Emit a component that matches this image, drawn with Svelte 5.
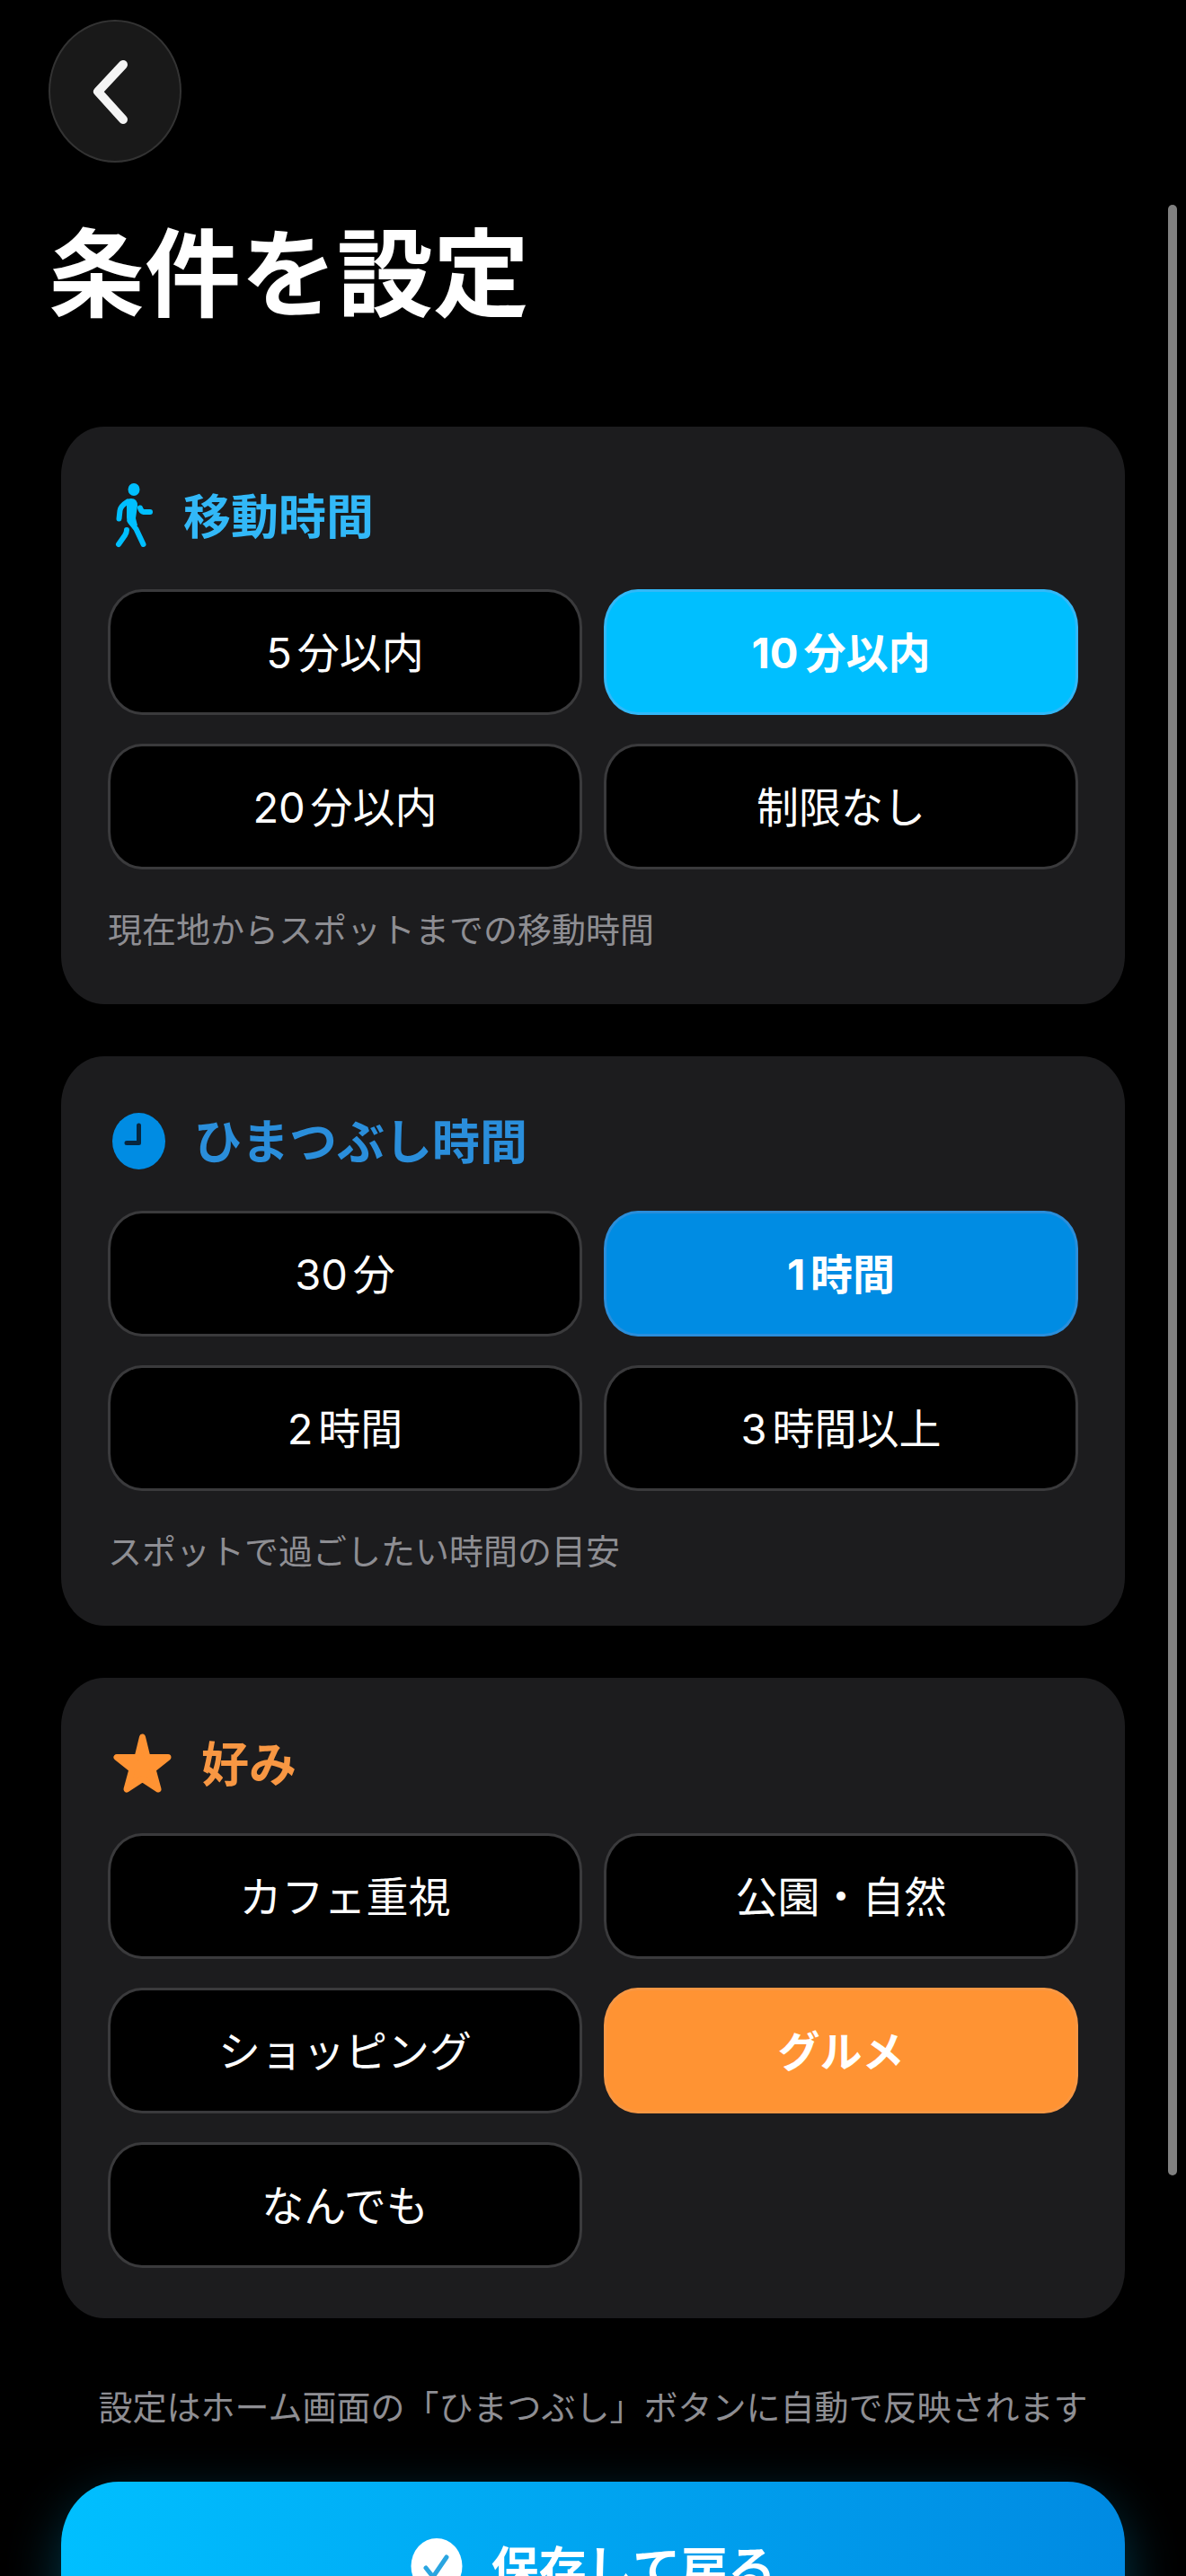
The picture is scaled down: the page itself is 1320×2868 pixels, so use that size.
<script lang="ts">
  interface Section {
    id: string;
    title: string;
    icon: 'walk' | 'clock' | 'star';
    options: string[];
    selected: string;
    hint?: string;
  }

  let sections: Section[] = $state([
    {
      id: 'travel',
      title: '移動時間',
      icon: 'walk',
      options: ['5分以内', '10分以内', '20分以内', '制限なし'],
      selected: '10分以内',
      hint: '現在地からスポットまでの移動時間',
    },
    {
      id: 'stay',
      title: 'ひまつぶし時間',
      icon: 'clock',
      options: ['30分', '1時間', '2時間', '3時間以上'],
      selected: '1時間',
      hint: 'スポットで過ごしたい時間の目安',
    },
    {
      id: 'taste',
      title: '好み',
      icon: 'star',
      options: ['カフェ重視', '公園・自然', 'ショッピング', 'グルメ', 'なんでも'],
      selected: 'グルメ',
    },
  ]);
</script>

<div class="screen">
  <main class="content">
    <header>
      <button class="back" aria-label="戻る">
        <svg width="44" height="76" viewBox="0 0 44 76" aria-hidden="true">
          <path d="M36 8 8 38l28 31" />
        </svg>
      </button>
      <h1>条件を設定</h1>
    </header>

    <div class="cards">
      {#each sections as section (section.id)}
        <section class="card {section.id}" aria-labelledby={section.id}>
          <div class="heading">
            {#if section.icon === 'walk'}
              <svg width="60" height="85" viewBox="0 0 60 85" aria-hidden="true">
                <ellipse cx="29" cy="14" rx="6.5" ry="7" fill="currentColor" />
                <path d="M18 29q4-5 8-5 7 0 7 8l-2 14 2 8-7 1q-5-4-5-10V30z" fill="currentColor" />
                <g class="limbs">
                  <path d="M22 27.500q-8 5-8.500 10l-1 9" />
                  <path d="M36 34.500q1 4 4 4.500h7" />
                  <path d="M24.500 49l7 9 8 17" />
                  <path d="M21 59q0 3-2 6l-7 10" />
                </g>
              </svg>
            {:else if section.icon === 'clock'}
              <svg width="72" height="76" viewBox="0 0 72 76" aria-hidden="true">
                <ellipse cx="34.5" cy="38.5" rx="29.5" ry="31.5" fill="currentColor" />
                <path class="hands" d="M34.5 21v19.500H21" />
              </svg>
            {:else}
              <svg width="80" height="77" viewBox="0 0 80 77" aria-hidden="true">
                <path
                  class="star"
                  d="M38.500 10 44 32.500H67L50 46 56 68 38.500 56.500 21 68 27 46 10 32.500H33z"
                />
              </svg>
            {/if}
            <h2 id={section.id}>{section.title}</h2>
          </div>

          <div class="options">
            {#each section.options as option}
              <button
                class="option"
                class:selected={section.selected === option}
                aria-pressed={section.selected === option}
                onclick={() => (section.selected = option)}
              >
                {option}
              </button>
            {/each}
          </div>

          {#if section.hint}
            <p class="hint">{section.hint}</p>
          {/if}
        </section>
      {/each}
    </div>

    <p class="note">設定はホーム画面の「ひまつぶし」ボタンに自動で反映されます</p>

    <button class="save">
      <svg width="58" height="62" viewBox="0 0 58 62" aria-hidden="true">
        <ellipse cx="29" cy="31" rx="28.500" ry="31" fill="#fff" />
        <path d="M17 33l8 10 15-22" />
      </svg>
      <span>保存して戻る</span>
    </button>
  </main>

  <div class="indicator"></div>
</div>

<style>
  :global(body) {
    background: #000;
  }

  .screen {
    position: relative;
    height: 100vh;
    overflow: hidden;
    background: #000;
    color: #fff;
    font-family: Inter, 'Noto Sans CJK JP', sans-serif;
    text-autospace: normal;
  }

  .content {
    box-sizing: border-box;
    height: 100%;
    padding: 22px 68px 0;
    overflow-y: auto;
    scrollbar-width: none;
  }

  button {
    font-family: inherit;
    color: inherit;
    cursor: pointer;
  }

  svg {
    display: block;
    flex: none;
  }

  header {
    margin: 0 -14px 110px;
  }

  .back {
    display: flex;
    align-items: center;
    justify-content: center;
    width: 148px;
    height: 159px;
    padding: 0 10px 0 0;
    border: 2px solid #333;
    border-radius: 50%;
    background: #191919;
  }

  .back path {
    fill: none;
    stroke: #f4f4f4;
    stroke-width: 10;
    stroke-linecap: round;
    stroke-linejoin: round;
  }

  h1 {
    margin: 64px 0 0;
    font-size: 107px;
    font-weight: 700;
    line-height: 120px;
  }

  .cards {
    display: flex;
    flex-direction: column;
    gap: 58px;
  }

  .card {
    padding: 56px 52px;
    border-radius: 48px / 54px;
    background: #1c1c1e;
  }

  .travel {
    --accent: #00bfff;
    --title: #32b8f8;
  }

  .stay {
    --accent: #008ce3;
    --title: #2a8edb;
  }

  .taste {
    --accent: #ff9333;
    --title: #f89743;
  }

  .heading {
    display: flex;
    align-items: center;
    gap: 24px;
    margin-bottom: 40px;
    color: var(--accent);
  }

  .limbs {
    fill: none;
    stroke: currentColor;
    stroke-width: 6;
    stroke-linecap: round;
    stroke-linejoin: round;
  }

  .hands {
    fill: none;
    stroke: #07273f;
    stroke-width: 5;
    stroke-linecap: round;
    stroke-linejoin: round;
  }

  .star {
    fill: currentColor;
    stroke: currentColor;
    stroke-width: 7;
    stroke-linejoin: round;
  }

  h2 {
    margin: 0;
    padding-top: 4px;
    color: var(--title);
    font-size: 53px;
    font-weight: 600;
    line-height: 72px;
  }

  .options {
    display: grid;
    grid-template-columns: 1fr 1fr;
    gap: 32px 24px;
  }

  .option {
    height: 140px;
    padding: 0 0 6px;
    border: 3px solid #3a3a3c;
    border-radius: 38px / 42px;
    background: #000;
    font-size: 47px;
    font-weight: 400;
  }

  .option.selected {
    border-color: var(--title);
    background: var(--accent);
    font-weight: 700;
  }

  .hint,
  .note {
    margin: 40px 0 0;
    color: #8e8e93;
    font-size: 38px;
    line-height: 54px;
  }

  .note {
    margin: 72px 0 56px;
    text-align: center;
    white-space: nowrap;
  }

  .save {
    display: flex;
    align-items: center;
    justify-content: center;
    gap: 32px;
    width: 100%;
    height: 188px;
    padding: 0;
    border: 0;
    border-radius: 64px / 70px;
    background: linear-gradient(90deg, #00bfff, #008ae2);
    box-shadow: 0 22px 60px rgba(0, 191, 255, 0.3);
    font-size: 53px;
    font-weight: 700;
  }

  .save path {
    fill: none;
    stroke: #2aa5e0;
    stroke-width: 5;
    stroke-linecap: round;
    stroke-linejoin: round;
  }

  .indicator {
    position: absolute;
    top: 228px;
    right: 10px;
    bottom: 446px;
    width: 10px;
    border-radius: 5px;
    background: #808080;
  }
</style>
